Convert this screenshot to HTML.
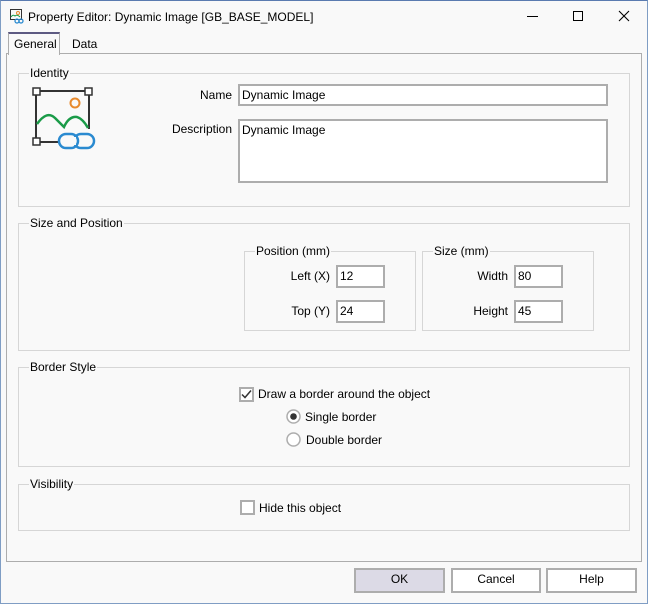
<!DOCTYPE html>
<html><head><meta charset="utf-8"><style>
*{box-sizing:border-box;margin:0;padding:0}
body{width:648px;height:604px;background:#f9f9f9;font-family:"Liberation Sans",Arial,sans-serif;font-size:12px;color:#000;position:relative;overflow:hidden}
.a{position:absolute}
.win{left:0;top:0;width:648px;height:604px;border:1px solid #7f9dc4;border-top:1px solid #5a7bb0}
.grp{position:absolute;border:1px solid #d6d6d6}
.lg{position:absolute;top:-8px;left:10px;background:#f9f9f9;padding:0 1px;line-height:14px}
.inp{position:absolute;background:#fff;border:2px solid #adadad;padding:2px 2px 0;line-height:15px}
.btn{position:absolute;border:2px solid #adadad;background:#fff;text-align:center;line-height:19px}
.r{position:absolute;text-align:right;line-height:14px}
</style></head><body>
<div class="a win"></div>
<svg class="a" style="left:9px;top:8px" width="16" height="16" viewBox="0 0 16 16"><rect x="1.5" y="1.5" width="11" height="10" fill="none" stroke="#333"/><path d="M2 9 Q4 6 6 8 Q8 6 11 9" stroke="#1a9b48" fill="none"/><circle cx="9" cy="5" r="1.5" fill="none" stroke="#e88a2c"/><circle cx="8" cy="13" r="2" fill="none" stroke="#2a8ad0" stroke-width="1.3"/><circle cx="12" cy="13" r="2" fill="none" stroke="#2a8ad0" stroke-width="1.3"/></svg>
<div class="a" style="left:28px;top:10px;line-height:14px">Property Editor: Dynamic Image [GB_BASE_MODEL]</div>
<div class="a" style="left:527px;top:16px;width:11px;height:1px;background:#000"></div>
<div class="a" style="left:573px;top:11px;width:10px;height:10px;border:1px solid #000"></div>
<svg class="a" style="left:618px;top:10px" width="12" height="12"><path d="M1 1L11 11M11 1L1 11" stroke="#000" stroke-width="1.1"/></svg>
<div class="a" style="left:6px;top:53px;width:636px;height:509px;border:1px solid #adadad"></div>
<div class="a" style="left:8px;top:32px;width:52px;height:23px;background:#f9f9f9;border:1px solid #adadad;border-top:2px solid #5d5a82;border-bottom:none"></div>
<div class="a" style="left:14px;top:37px;line-height:14px">General</div>
<div class="a" style="left:72px;top:37px;line-height:14px">Data</div>
<div class="grp" style="left:18px;top:73px;width:612px;height:134px"><div class="lg">Identity</div></div>
<svg class="a" style="left:31px;top:86px" width="68" height="66" viewBox="0 0 68 66"><path d="M5 5H58V43M5 5V56H27" fill="none" stroke="#333" stroke-width="2"/><rect x="2" y="2" width="7" height="7" fill="#fff" stroke="#333" stroke-width="1.5"/><rect x="54" y="2" width="7" height="7" fill="#fff" stroke="#333" stroke-width="1.5"/><rect x="2" y="52" width="7" height="7" fill="#fff" stroke="#333" stroke-width="1.5"/><circle cx="44" cy="17" r="4.5" fill="none" stroke="#e88a2c" stroke-width="2"/><path d="M6 38 Q16 24 24 32 Q30 38 33 41 Q38 30 46 31 Q52 33 57 42" fill="none" stroke="#1a9b48" stroke-width="2.5"/><rect x="28" y="48" width="19" height="14" rx="7" fill="none" stroke="#2a8ad0" stroke-width="2.5"/><rect x="43" y="48" width="20" height="14" rx="7" fill="none" stroke="#2a8ad0" stroke-width="2.5"/><rect x="41" y="51" width="4" height="8" fill="#f9f9f9"/></svg>
<div class="r" style="left:150px;top:88px;width:82px">Name</div>
<div class="inp" style="left:238px;top:84px;width:370px;height:22px">Dynamic Image</div>
<div class="r" style="left:150px;top:122px;width:82px">Description</div>
<div class="inp" style="left:238px;top:119px;width:370px;height:64px">Dynamic Image</div>
<div class="grp" style="left:18px;top:223px;width:612px;height:128px"><div class="lg">Size and Position</div></div>
<div class="grp" style="left:244px;top:251px;width:172px;height:80px"><div class="lg">Position (mm)</div></div>
<div class="grp" style="left:422px;top:251px;width:172px;height:80px"><div class="lg">Size (mm)</div></div>
<div class="r" style="left:260px;top:269px;width:70px">Left (X)</div>
<div class="inp" style="left:336px;top:265px;width:49px;height:23px">12</div>
<div class="r" style="left:260px;top:304px;width:70px">Top (Y)</div>
<div class="inp" style="left:336px;top:300px;width:49px;height:23px">24</div>
<div class="r" style="left:438px;top:269px;width:70px">Width</div>
<div class="inp" style="left:514px;top:265px;width:49px;height:23px">80</div>
<div class="r" style="left:438px;top:304px;width:70px">Height</div>
<div class="inp" style="left:514px;top:300px;width:49px;height:23px">45</div>
<div class="grp" style="left:18px;top:367px;width:612px;height:100px"><div class="lg">Border Style</div></div>
<div class="a" style="left:239px;top:387px;width:15px;height:15px;border:2px solid #adadad;background:#fff"></div>
<svg class="a" style="left:239px;top:387px" width="15" height="15"><path d="M3 7.5L6 10.5L12 3.5" stroke="#333" stroke-width="1.5" fill="none"/></svg>
<div class="a" style="left:258px;top:387px;line-height:14px">Draw a border around the object</div>
<svg class="a" style="left:286px;top:409px" width="15" height="15"><circle cx="7.5" cy="7.5" r="6.5" fill="#fff" stroke="#adadad" stroke-width="1.5"/><circle cx="7.5" cy="7.5" r="3.3" fill="#333"/></svg>
<div class="a" style="left:305px;top:410px;line-height:14px">Single border</div>
<svg class="a" style="left:286px;top:432px" width="15" height="15"><circle cx="7.5" cy="7.5" r="6.5" fill="#fff" stroke="#adadad" stroke-width="1.5"/></svg>
<div class="a" style="left:306px;top:433px;line-height:14px">Double border</div>
<div class="grp" style="left:18px;top:484px;width:612px;height:47px"><div class="lg">Visibility</div></div>
<div class="a" style="left:240px;top:500px;width:15px;height:15px;border:2px solid #adadad;background:#fff"></div>
<div class="a" style="left:259px;top:501px;line-height:14px">Hide this object</div>
<div class="btn" style="left:354px;top:568px;width:91px;height:25px;background:#dcdae6">OK</div>
<div class="btn" style="left:451px;top:568px;width:90px;height:25px">Cancel</div>
<div class="btn" style="left:546px;top:568px;width:91px;height:25px">Help</div>
</body></html>
